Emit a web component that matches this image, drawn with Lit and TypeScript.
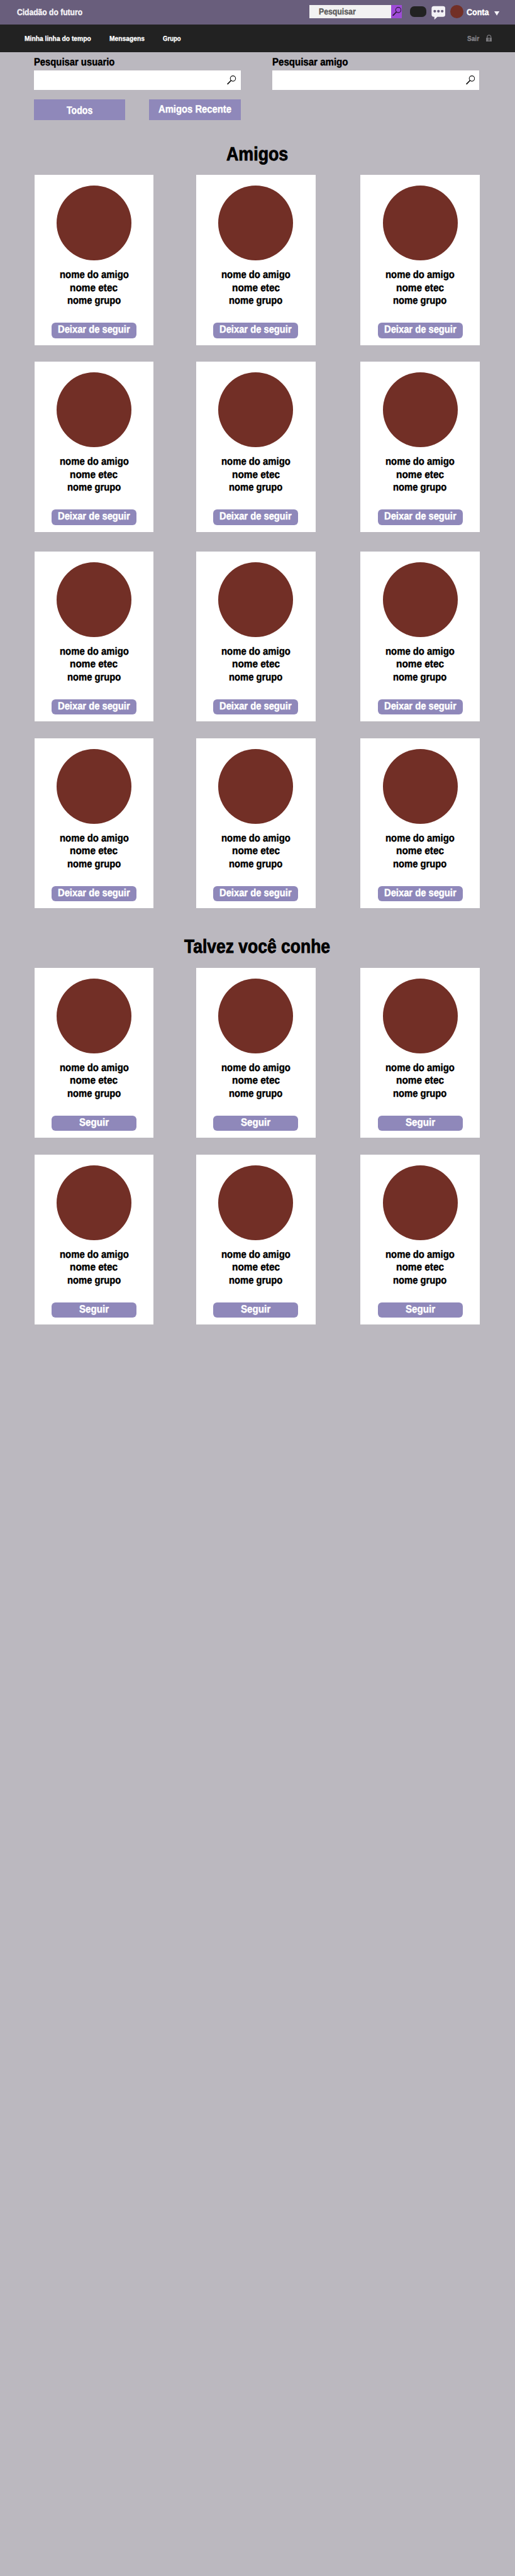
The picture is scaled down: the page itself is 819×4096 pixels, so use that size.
import { LitElement, html, css, svg, unsafeCSS } from "lit";
import { customElement, property } from "lit/decorators.js";

// Design units: the layout is drawn on a 1200-unit wide grid.
const SCALE = 0.6825;
const u = (n: number) => unsafeCSS(`${+(n * SCALE).toFixed(3)}px`);

const lens = svg`
  <circle cx="13.2" cy="6.8" r="5.9" fill="none" stroke="currentColor" stroke-width="1.5"/>
  <path d="M9 11.2 L1.6 18.8" stroke="currentColor" stroke-width="2.4" stroke-linecap="round"/>
`;

// One line of heavy type condensed to a given measure.
@customElement("fit-text")
class FitText extends LitElement {
  @property() text = "";
  @property({ type: Number }) measure = 0;

  static styles = css`
    :host {
      display: block;
    }
    svg {
      display: block;
      height: 1.362em;
      overflow: visible;
    }
    text {
      font-family: "Liberation Sans", sans-serif;
      font-weight: 700;
      font-size: 1.03em;
      fill: currentColor;
      stroke: currentColor;
      stroke-width: 0.028em;
      text-rendering: geometricPrecision;
    }
  `;

  render() {
    const w = +(this.measure * SCALE).toFixed(2);
    return html`<svg width=${w}>
      <text x="0" y="1.038em" textLength=${w} lengthAdjust="spacingAndGlyphs">${this.text}</text>
    </svg>`;
  }
}

const fit = (text: string, measure: number) =>
  html`<fit-text text=${text} measure=${measure}></fit-text>`;

@customElement("friend-card")
class FriendCard extends LitElement {
  @property() action = "";
  @property({ type: Number }) measure = 0;

  static styles = css`
    :host {
      display: flex;
      flex-direction: column;
      align-items: center;
      box-sizing: border-box;
      width: ${u(278)};
      height: ${u(396)};
      padding-top: ${u(25)};
      background: #fff;
      color: #000;
      font-size: ${u(23.8)};
    }
    .photo {
      flex: none;
      width: ${u(174)};
      height: ${u(174)};
      border-radius: 50%;
      background: #722f26;
    }
    .info {
      margin-top: ${u(17.4)};
    }
    .line {
      display: flex;
      align-items: center;
      justify-content: center;
      height: ${u(30)};
    }
    .button {
      display: flex;
      align-items: center;
      justify-content: center;
      box-sizing: border-box;
      width: ${u(198)};
      height: ${u(36)};
      margin-top: ${u(37.6)};
      padding-bottom: ${u(6)};
      border-radius: ${u(9)};
      background: #8f88ba;
      color: #fff;
    }
  `;

  render() {
    return html`
      <div class="photo"></div>
      <div class="info">
        <div class="line">${fit("nome do amigo", 161)}</div>
        <div class="line">${fit("nome etec", 111.5)}</div>
        <div class="line">${fit("nome grupo", 125)}</div>
      </div>
      <div class="button">${fit(this.action, this.measure)}</div>
    `;
  }
}

@customElement("app-root")
class AppRoot extends LitElement {
  static styles = css`
    :host {
      display: block;
      box-sizing: border-box;
      height: 4096px;
      overflow: hidden;
      background: #bbb8bf;
      color: #000;
      font-family: "Liberation Sans", sans-serif;
    }
    svg {
      display: block;
      flex: none;
    }
    .top {
      display: flex;
      align-items: center;
      height: ${u(57)};
      padding-left: ${u(39.2)};
      background: #695e7c;
      color: #f3f1f5;
      font-size: ${u(19.6)};
    }
    .brand {
      width: ${u(681.8)};
    }
    .search {
      display: flex;
      align-items: center;
      box-sizing: border-box;
      width: ${u(191)};
      height: ${u(32)};
      margin-bottom: ${u(3)};
      padding-left: ${u(21.2)};
      background: #f2f2f2;
      color: #5c5c5c;
    }
    .go {
      display: flex;
      width: ${u(25)};
      height: ${u(32)};
      margin-bottom: ${u(3)};
      background: #9e4bd8;
      color: #2c1638;
    }
    .go svg {
      width: ${u(21)};
      height: ${u(21)};
      margin: ${u(4.5)} 0 0 ${u(2.5)};
    }
    .pill {
      width: ${u(38)};
      height: ${u(26)};
      margin: 0 ${u(10.5)} ${u(3)} ${u(19)};
      border-radius: ${u(10)};
      background: #222;
    }
    .chat {
      width: ${u(33)};
      height: ${u(33)};
      margin-top: ${u(3)};
    }
    .user {
      width: ${u(31)};
      height: ${u(31)};
      margin: 0 ${u(8)} ${u(4)} ${u(11.5)};
      border-radius: 50%;
      background: #722f26;
    }
    .account {
      width: ${u(64)};
      color: #fff;
    }
    .caret {
      width: ${u(12)};
      height: ${u(10)};
      margin-top: ${u(5)};
    }
    .nav {
      display: flex;
      align-items: center;
      box-sizing: border-box;
      height: ${u(64)};
      padding: 0 0 ${u(2)} ${u(56.7)};
      background: #222;
      color: #fff;
      font-size: ${u(16.1)};
    }
    .timeline {
      width: ${u(198)};
    }
    .messages {
      width: ${u(125.5)};
    }
    .groups {
      width: ${u(708.3)};
    }
    .exit {
      width: ${u(43.5)};
      padding-top: ${u(1.5)};
      color: #85848a;
    }
    .lock {
      width: ${u(14)};
      height: ${u(17)};
      margin-top: ${u(1)};
    }
    .fields {
      display: flex;
      gap: ${u(74)};
      padding-left: ${u(79)};
    }
    .field {
      width: ${u(482)};
    }
    .label {
      display: flex;
      align-items: center;
      box-sizing: border-box;
      height: ${u(43)};
      padding-top: ${u(2.6)};
      margin-left: ${u(-0.5)};
      font-size: ${u(23.8)};
    }
    .box {
      display: flex;
      align-items: center;
      justify-content: flex-end;
      box-sizing: border-box;
      height: ${u(46)};
      padding-right: ${u(10.5)};
      background: #fff;
      color: #111;
    }
    .box svg {
      width: ${u(21)};
      height: ${u(21)};
    }
    .filters {
      display: flex;
      gap: ${u(56)};
      padding: ${u(22)} 0 0 ${u(79)};
    }
    .filter {
      display: flex;
      align-items: center;
      justify-content: center;
      box-sizing: border-box;
      width: ${u(213)};
      height: ${u(48)};
      background: #8f88ba;
      color: #fff;
      font-size: ${u(23.8)};
    }
    .recent {
      padding-bottom: ${u(4)};
    }
    .title {
      display: flex;
      align-items: center;
      justify-content: center;
      box-sizing: border-box;
      height: ${u(128)};
      padding-top: ${u(23.5)};
      font-size: ${u(43.2)};
    }
    .suggested {
      height: ${u(139)};
      padding-top: ${u(33.5)};
    }
    .row {
      display: flex;
      gap: ${u(99)};
      height: ${u(396)};
      padding-left: ${u(80)};
      margin-bottom: ${u(39)};
    }
    .row > :nth-child(3) {
      margin-left: ${u(6)};
    }
    .row.wide {
      margin-bottom: ${u(46)};
    }
    .row.last {
      margin-bottom: 0;
    }
  `;

  private row(action: string, measure: number, mod = "") {
    return html`<div class="row ${mod}">
      ${[0, 1, 2].map(() => html`<friend-card action=${action} measure=${measure}></friend-card>`)}
    </div>`;
  }

  private field(label: string, measure: number) {
    return html`<div class="field">
      <div class="label">${fit(label, measure)}</div>
      <div class="box"><svg viewBox="0 0 20 20">${lens}</svg></div>
    </div>`;
  }

  render() {
    return html`
      <div class="top">
        <div class="brand">${fit("Cidadão do futuro", 152.5)}</div>
        <div class="search">${fit("Pesquisar", 86)}</div>
        <div class="go"><svg viewBox="0 0 20 20">${lens}</svg></div>
        <div class="pill"></div>
        <svg class="chat" viewBox="0 0 33 33">
          <path
            fill="#f3f2f5"
            d="M6 1H27Q32.5 1 32.5 6.5V20.5Q32.5 26 27 26H14L7 32.5V26H6Q.5 26 .5 20.5V6.5Q.5 1 6 1Z"
          />
          <g fill="#695e7c">
            <circle cx="7.9" cy="12.9" r="3.1" />
            <circle cx="16.5" cy="12.9" r="3.1" />
            <circle cx="25.2" cy="12.9" r="3.1" />
          </g>
        </svg>
        <div class="user"></div>
        <div class="account">${fit("Conta", 52)}</div>
        <svg class="caret" viewBox="0 0 12 10"><path fill="#f7f5fa" d="M0 0H12L6 10Z" /></svg>
      </div>
      <div class="nav">
        <div class="timeline">${fit("Minha linha do tempo", 155)}</div>
        <div class="messages">${fit("Mensagens", 82)}</div>
        <div class="groups">${fit("Grupo", 42)}</div>
        <div class="exit">${fit("Sair", 28)}</div>
        <svg class="lock" viewBox="0 0 14 17">
          <path d="M2.7 9V5.5a4.3 4.3 0 0 1 8.6 0V9" fill="none" stroke="#77767a" stroke-width="1.9" />
          <rect y="7.5" width="14" height="9.5" fill="#77767a" />
          <path d="M7 10.5V15" stroke="#222" stroke-width="1.4" />
          <circle cx="7" cy="10.3" r="1.5" fill="#222" />
        </svg>
      </div>
      <div class="fields">
        ${this.field("Pesquisar usuario", 188)}${this.field("Pesquisar amigo", 176.5)}
      </div>
      <div class="filters">
        <div class="filter">${fit("Todos", 60.5)}</div>
        <div class="filter recent">${fit("Amigos Recente", 170)}</div>
      </div>
      <div class="title">${fit("Amigos", 144)}</div>
      ${this.row("Deixar de seguir", 168)}
      ${this.row("Deixar de seguir", 168, "wide")}
      ${this.row("Deixar de seguir", 168)}
      ${this.row("Deixar de seguir", 168, "last")}
      <div class="title suggested">${fit("Talvez você conhe", 340)}</div>
      ${this.row("Seguir", 69)}
      ${this.row("Seguir", 69, "last")}
    `;
  }
}
